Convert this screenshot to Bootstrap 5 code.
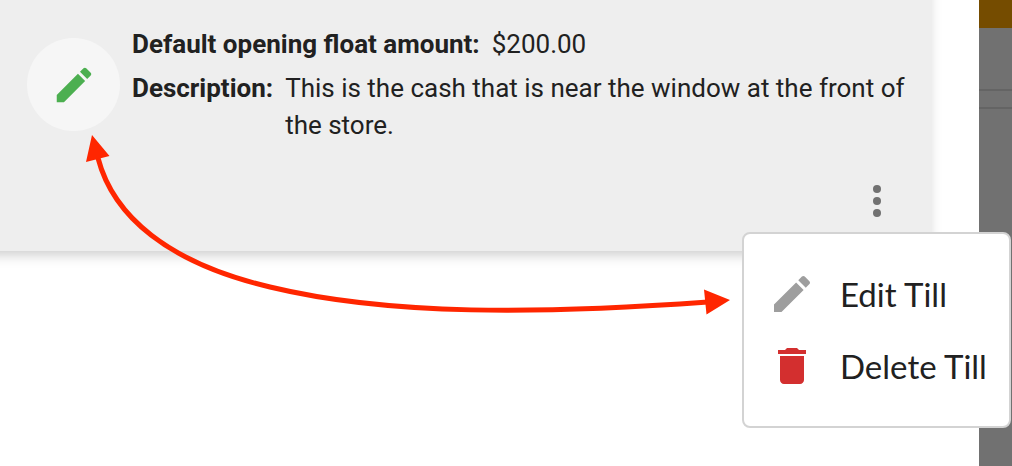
<!DOCTYPE html>
<html lang="en">
<head>
<meta charset="utf-8">
<meta name="viewport" content="width=device-width, initial-scale=1">
<title>Tills</title>
<link href="https://cdn.jsdelivr.net/npm/bootstrap@5.3.0/dist/css/bootstrap.min.css" rel="stylesheet">
<style>
  body { font-family: Roboto, sans-serif; font-size: 26px; line-height: 37px; color: #212121; background: #fff; }
  .page { min-height: 100vh; }
  .panel { padding-right: 48px; min-width: 0; }
  /* the card runs on past the top and left edges of the window */
  .till { margin: -20px 0 0 -20px; background: #eee; padding: 46px 24px 26px 47px; box-shadow: 0 6px 12px -2px rgba(0,0,0,.2); }
  .till-body { gap: 12px; }
  .edit-btn { width: 93px; height: 93px; margin-top: 12px; background: #f6f6f6; color: #4caf50; }
  .field { gap: 12px; margin-bottom: 7px; }
  .field dt { white-space: nowrap; }
  .more-btn { width: 48px; height: 48px; color: #717171; }
  .till-actions { margin: 26px 6px 0 0; }
  .till-menu { top: 55px; right: -110px; width: 269px; padding: 24px 0; background: #fff; border: 2px solid #d3d3d3; border-radius: 8px; z-index: 3; }
  .menu-btn { gap: 24px; padding: 12px 24px; font-family: Lato, sans-serif; font-size: 33px; line-height: 48px; color: #212121; white-space: nowrap; }
  .backdrop { width: 33px; background: #717171; }
  .bar-top { height: 28px; background: #754c00; }
  .bar-line { height: 20px; margin-top: 61px; border-top: 2px solid #646464; border-bottom: 2px solid #646464; }
  .arrow { top: 0; left: 0; z-index: 2; pointer-events: none; }
</style>
</head>
<body>
<div class="page d-flex position-relative">
  <main class="panel flex-grow-1 d-flow-root">
    <section class="till">
      <div class="till-body d-flex align-items-start">
        <button type="button" class="edit-btn btn rounded-circle border-0 p-0 flex-shrink-0 d-flex align-items-center justify-content-center" aria-label="Edit">
          <svg width="46" height="46" viewBox="0 0 24 24" fill="currentColor" aria-hidden="true"><path d="M3 17.25V21h3.75L17.81 9.94l-3.75-3.75L3 17.25zM20.71 7.04c.39-.39.39-1.02 0-1.41l-2.34-2.34c-.39-.39-1.02-.39-1.41 0l-1.83 1.83 3.75 3.75 1.83-1.83z"/></svg>
        </button>
        <dl class="mb-0">
          <div class="field d-flex"><dt>Default opening float amount:</dt><dd class="mb-0">$200.00</dd></div>
          <div class="field d-flex"><dt>Description:</dt><dd class="mb-0">This is the cash that is near the window at the front of the store.</dd></div>
        </dl>
      </div>
      <div class="till-actions d-flex justify-content-end">
        <div class="position-relative">
          <button type="button" class="more-btn btn border-0 p-0 d-flex" aria-label="More actions" aria-expanded="true">
            <svg width="48" height="48" viewBox="0 0 24 24" fill="currentColor" aria-hidden="true"><circle cx="12" cy="6" r="2"/><circle cx="12" cy="12" r="2"/><circle cx="12" cy="18" r="2"/></svg>
          </button>
          <div class="till-menu position-absolute">
            <button type="button" class="menu-btn btn border-0 rounded-0 w-100 d-flex align-items-center">
              <svg class="flex-shrink-0" width="48" height="48" viewBox="0 0 24 24" fill="#9e9e9e" aria-hidden="true"><path d="M3 17.25V21h3.75L17.81 9.94l-3.75-3.75L3 17.25zM20.71 7.04c.39-.39.39-1.02 0-1.41l-2.34-2.34c-.39-.39-1.02-.39-1.41 0l-1.83 1.83 3.75 3.75 1.83-1.83z"/></svg>
              <span>Edit Till</span>
            </button>
            <button type="button" class="menu-btn btn border-0 rounded-0 w-100 d-flex align-items-center">
              <svg class="flex-shrink-0" width="48" height="48" viewBox="0 0 24 24" fill="#d32f2f" aria-hidden="true"><path d="M6 19c0 1.1.9 2 2 2h8c1.1 0 2-.9 2-2V7H6v12zM19 4h-3.5l-1-1h-5l-1 1H5v2h14V4z"/></svg>
              <span>Delete Till</span>
            </button>
          </div>
        </div>
      </div>
    </section>
  </main>
  <aside class="backdrop flex-shrink-0">
    <div class="bar-top"></div>
    <div class="bar-line"></div>
  </aside>
  <svg class="arrow position-absolute" width="740" height="330" viewBox="0 0 740 330" aria-hidden="true">
    <path d="M98 158C113 216 168 263 270 287C390 316 540 314 708 302" fill="none" stroke="#ff2600" stroke-width="5"/>
    <path d="M92 135l17.500 21-23.500 6zM730 300l-26-10.500 2.500 25z" fill="#ff2600"/>
  </svg>
</div>
<script src="https://cdn.jsdelivr.net/npm/bootstrap@5.3.0/dist/js/bootstrap.bundle.min.js"></script>
</body>
</html>
